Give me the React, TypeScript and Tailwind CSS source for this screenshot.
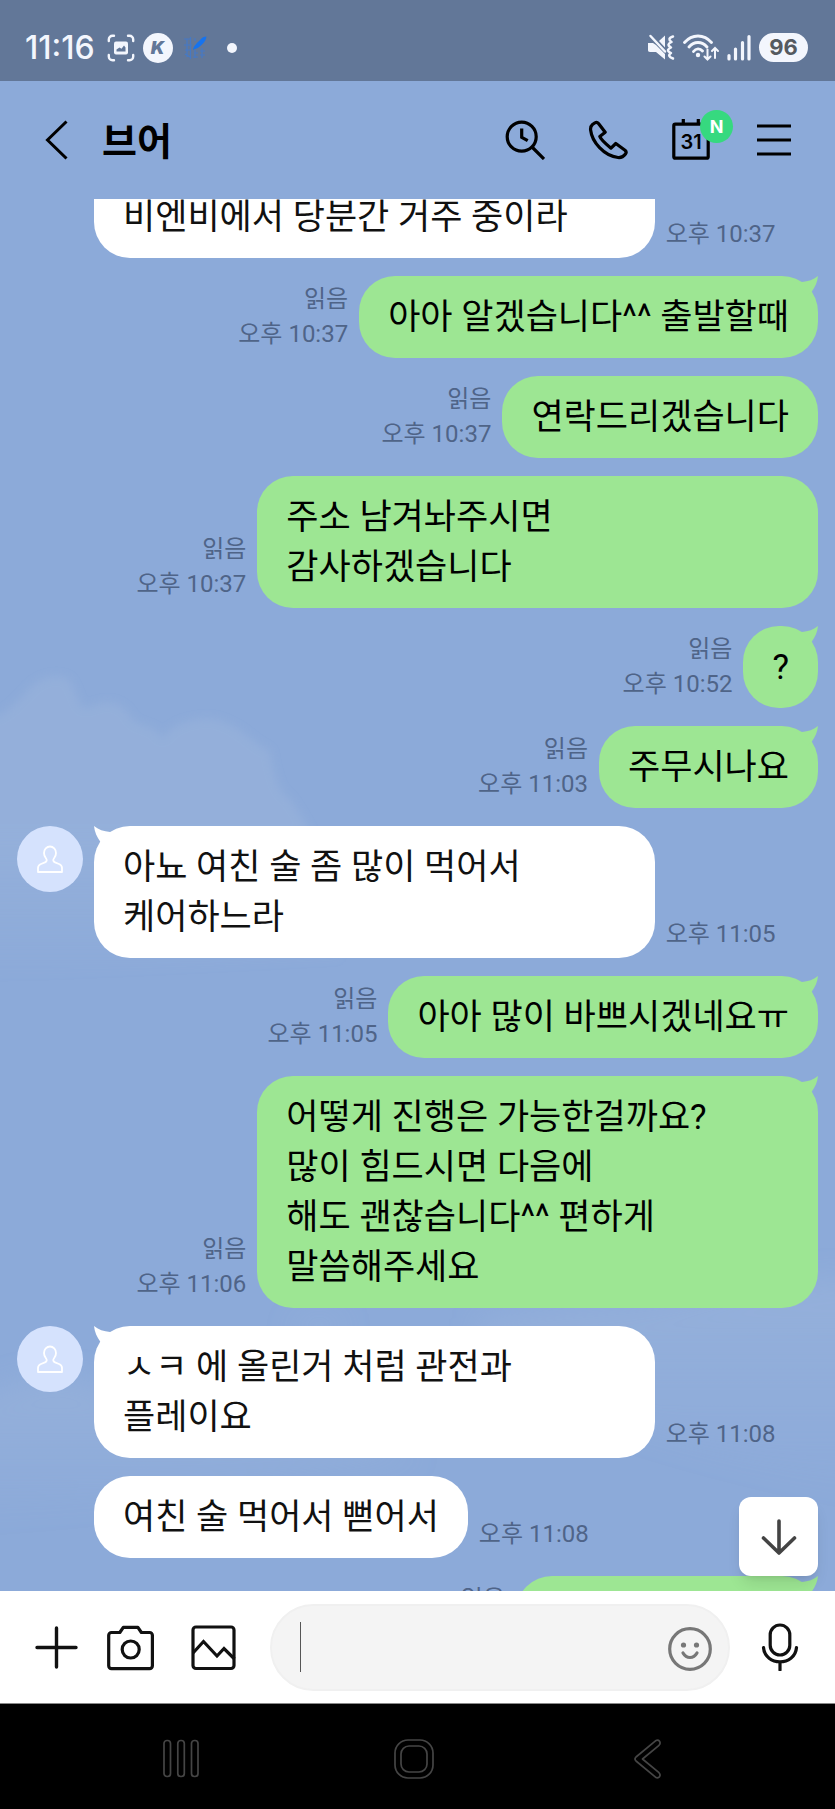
import React from 'react';

type Message = {
  id: number;
  from: 'me' | 'them';
  text: string;
  time: string;
  tail?: boolean;
  avatar?: boolean;
  size?: string;
};

const messages: Message[] = [
  { id: 1, from: 'them', text: '비엔비에서 당분간 거주 중이라', time: '오후 10:37', size: 'w-[70%] rounded-t-none' },
  { id: 2, from: 'me', text: '아아 알겠습니다^^ 출발할때', time: '오후 10:37', tail: true },
  { id: 3, from: 'me', text: '연락드리겠습니다', time: '오후 10:37' },
  { id: 4, from: 'me', text: '주소 남겨놔주시면\n감사하겠습니다', time: '오후 10:37', size: 'w-[70%]' },
  { id: 5, from: 'me', text: '?', time: '오후 10:52', tail: true },
  { id: 6, from: 'me', text: '주무시나요', time: '오후 11:03', tail: true },
  { id: 7, from: 'them', text: '아뇨 여친 술 좀 많이 먹어서\n케어하느라', time: '오후 11:05', tail: true, avatar: true, size: 'w-[70%]' },
  { id: 8, from: 'me', text: '아아 많이 바쁘시겠네요ㅠ', time: '오후 11:05', tail: true },
  { id: 9, from: 'me', text: '어떻게 진행은 가능한걸까요?\n많이 힘드시면 다음에\n해도 괜찮습니다^^ 편하게\n말씀해주세요', time: '오후 11:06', tail: true, size: 'w-[70%]' },
  { id: 10, from: 'them', text: 'ㅅㅋ 에 올린거 처럼 관전과\n플레이요', time: '오후 11:08', tail: true, avatar: true, size: 'w-[70%]' },
  { id: 11, from: 'them', text: '여친 술 먹어서 뻗어서', time: '오후 11:08' },
  { id: 12, from: 'me', text: '', time: '', tail: true, size: 'w-[302px]' },
];

const StatusBar: React.FC = () => (
  <div className="flex h-[81px] shrink-0 items-center justify-between bg-[#627798] pt-3.5 pr-[27px] pl-[25px] text-[#f3f6fd]">
    <div className="flex items-center">
      <span className="font-['Inter'] text-[32px] leading-8 font-medium">11:16</span>
      <svg className="ml-3 size-7" viewBox="0 0 28 28" fill="none" stroke="currentColor" strokeWidth="2.4" strokeLinecap="round">
        <path d="M1.8 7V5.5A3.7 3.7 0 0 1 5.5 1.8H7M21 1.8h1.5a3.7 3.7 0 0 1 3.7 3.7V7M26.2 21v1.5a3.7 3.7 0 0 1-3.7 3.7H21M7 26.2H5.5a3.7 3.7 0 0 1-3.7-3.7V21" />
        <rect x="7" y="7.5" width="14" height="13" rx="2" fill="currentColor" stroke="none" />
        <path d="M9.5 17.5v-2l3-2 2 1.3 2.5-3.3 1.500 2v4z" fill="#627798" stroke="none" />
      </svg>
      <span className="ml-2 flex size-[30px] items-center justify-center rounded-full bg-[#f3f6fd] font-['Inter'] text-lg font-black text-[#627798] italic">K</span>
      <svg className="ml-2.5 size-6" viewBox="0 0 24 24" fill="none">
        <path d="M1 3h7M1 9h8M2 14h5M2 18l5 3M4 3v18M7.5 1v22M12 2v3M11 17h4M10 21h5M12 14v8M19 12v10M17 15h5M17 19h5" stroke="#3c79d4" strokeWidth="1.2" opacity=".75" />
        <path d="M10 14c.5-4 4-7 7-10 2-2.500 4-3.500 6.500-3.500-.5 3-1.500 5-4 7.500-3 3-5.500 4.500-7.500 5z" fill="#1673ee" />
      </svg>
      <span className="ml-5 size-2.5 rounded-full bg-current" />
    </div>
    <div className="flex items-center gap-2">
      <svg className="h-[27px] w-7" viewBox="0 0 28 27" fill="none" stroke="currentColor" strokeWidth="2.5" strokeLinecap="round" strokeLinejoin="round">
        <path d="M1 9h5l3 2 9 9v5.500L9 18H3c-1.500 0-2-.8-2-2z" fill="currentColor" stroke="none" />
        <path d="M18 1.500v12l-6-6.500z" fill="currentColor" stroke="none" />
        <path d="M3.500 2 18 17.500" />
        <path d="M26 2.500c-4.500 1.500-4.500 3.500-1.500 5.500-4 2-4 3.500-.5 5.500-4 2-4 3.500 0 5.500-3 2-2 4 2 5.500" />
      </svg>
      <svg className="h-[27px] w-9" viewBox="0 0 36 27" fill="none" stroke="currentColor" strokeWidth="2.8" strokeLinecap="round">
        <path d="M1.500 8.500C9-.2 21-.2 28.500 8.500M6 13c5-6 13-6 18 0M10.500 17.500c2.500-3.500 6.500-3.500 9-.5" />
        <circle cx="15" cy="21" r="2.2" fill="currentColor" stroke="none" />
        <path d="M24.500 15.500v10M21.500 22.500l3 3 3-3M32 24V14M29 17l3-3 3 3" strokeWidth="2" />
      </svg>
      <svg className="h-[27px] w-6" viewBox="0 0 24 27" fill="none" stroke="currentColor" strokeWidth="3.2" strokeLinecap="round">
        <path d="M2 21.500V25M8.500 15v10M15.500 8.500V25M22 2.500V25" />
      </svg>
      <span className="flex h-[29px] w-[49px] items-center justify-center rounded-full bg-current font-['Inter'] text-[22px] font-bold">
        <span className="text-[#555a60]">96</span>
      </span>
    </div>
  </div>
);

const Header: React.FC = () => (
  <header className="flex h-[118px] shrink-0 items-center pr-[41px] pl-9">
    <button type="button" aria-label="뒤로" className="size-10">
      <svg viewBox="0 0 40 40" fill="none" stroke="currentColor" strokeWidth="3">
        <path d="M30.500 1.500 11.500 20l19 18.500" />
      </svg>
    </button>
    <h1 className="ml-6.5 flex-1 pt-1 text-[38px] leading-10 font-bold">브어</h1>
    <div className="flex items-center gap-[43px]">
      <button type="button" aria-label="검색" className="size-10">
        <svg viewBox="0 0 40 40" fill="none" stroke="currentColor" strokeWidth="3.2">
          <circle cx="16.7" cy="16.7" r="14.5" />
          <path d="M16.700 8.500v8.800l6 3.400M27 27l12 12" />
        </svg>
      </button>
      <button type="button" aria-label="통화" className="size-10">
        <svg viewBox="0 0 40 40" fill="none" stroke="currentColor" strokeWidth="3.2" strokeLinejoin="round">
          <path d="M4.500 4.500 7 2.800Q9 1.700 10.500 3.500L17.200 12.300 11.800 16.500Q13 20 23 28.200L27.800 23.500 37 30.200Q39 32 37.500 34 34.500 38 30 37.500C16 36 4 22 2.600 10Q2.200 6.500 4.500 4.500Z" />
        </svg>
      </button>
      <button type="button" aria-label="일정" className="relative size-10">
        <svg className="overflow-visible" viewBox="0 0 40 40" fill="none" stroke="currentColor" strokeWidth="3.2">
          <rect x="2.8" y="4.2" width="34.4" height="34" rx="1.5" />
          <path d="M12.300-1v5M27.300-1v5" />
        </svg>
        <span className="absolute inset-0 flex items-center justify-center pt-1 font-['Inter'] text-xl leading-5 font-semibold">31</span>
        <span className="absolute -top-2.5 left-[29px] flex size-[33px] items-center justify-center rounded-full bg-[#36d97f] font-['Inter'] text-lg font-bold text-white">N</span>
      </button>
      <button type="button" aria-label="메뉴" className="size-10">
        <svg viewBox="0 0 40 40" fill="none" stroke="currentColor" strokeWidth="3.2">
          <path d="M3 6h34M3 20h34M3 34h34" />
        </svg>
      </button>
    </div>
  </header>
);

const Clouds: React.FC = () => (
  <svg className="absolute inset-x-0 top-0 w-full" viewBox="0 0 835 1392" aria-hidden="true">
    <defs>
      <linearGradient id="cloud" x1="0" y1="0" x2="0" y2="1">
        <stop offset="0" stopColor="#9db6dc" stopOpacity=".5" />
        <stop offset=".5" stopColor="#9db6dc" stopOpacity=".5" />
        <stop offset="1" stopColor="#9db6dc" stopOpacity="0" />
      </linearGradient>
      <linearGradient id="haze" x1="0" y1="0" x2="0" y2="1">
        <stop offset="0" stopColor="#9db6dc" stopOpacity=".5" />
        <stop offset="1" stopColor="#9db6dc" stopOpacity="0" />
      </linearGradient>
      <filter id="soft" x="-10%" y="-10%" width="120%" height="120%">
        <feGaussianBlur stdDeviation="4" />
      </filter>
      <filter id="softer" x="-20%" y="-20%" width="140%" height="140%">
        <feGaussianBlur stdDeviation="14" />
      </filter>
    </defs>
    <path
      fill="url(#cloud)"
      filter="url(#soft)"
      d="M-20 522C0 520 12 508 24 496 36 478 60 472 70 482 80 500 78 512 90 508 108 500 122 502 132 520 142 530 154 524 162 540 172 524 196 518 214 520 244 528 248 542 270 552 274 580 280 594 290 600 310 630 330 660 340 760L-20 780Z"
    />
    <g fill="url(#haze)" filter="url(#softer)">
      <path d="M-40 1205C20 1180 60 1170 110 1190 200 1210 300 1210 420 1260L-40 1320Z" />
      <path d="M480 1120C560 1105 620 1110 700 1095 760 1085 800 1080 890 1080V1300C740 1260 580 1220 480 1160Z" />
      <path d="M290 1130q20-20 50-8l10 18h-60z" />
    </g>
  </svg>
);

const Avatar: React.FC = () => (
  <span className="flex size-[66px] items-center justify-center rounded-full bg-[#d5e2fd]">
    <svg className="size-7" viewBox="0 0 28 28" fill="none" stroke="#fff" strokeWidth="1.8" strokeLinejoin="round">
      <path d="M2 27v-4c0-2 1-3.200 3-4l4-1.700c2-.8 2.300-2.500.8-4.300C8.500 11.500 8 10 8 8a6 6.500 0 0 1 12 0c0 2-.5 3.500-1.800 5-1.500 1.800-1.200 3.500.8 4.300l4 1.700c2 .8 3 2 3 4v4z" />
    </svg>
  </span>
);

const Bubble: React.FC<{ message: Message }> = ({ message }) => {
  const mine = message.from === 'me';
  return (
    <div
      className={`relative min-h-[82px] min-w-[74px] rounded-[36px] px-[29px] pt-[17px] pb-[15px] text-[35px] leading-[50px] whitespace-pre-line ${
        mine ? 'bg-[#9de693] text-center text-black' : 'bg-white text-[#111]'
      } ${message.size ?? ''}`}
    >
      {message.tail && (
        <svg
          className={`absolute top-0 size-5 ${mine ? 'right-0 -scale-x-100 text-[#9de693]' : 'left-0 text-white'}`}
          viewBox="0 0 20 20"
          fill="currentColor"
        >
          <path d="M0 0C4 3.500 10 5.500 16 6l4 4-10 10-3.500-4C3 11 .5 6 0 0Z" />
        </svg>
      )}
      <p className={message.size ? 'text-left' : ''}>{message.text}</p>
    </div>
  );
};

const MessageRow: React.FC<{ message: Message }> = ({ message }) => {
  if (message.from === 'me') {
    return (
      <li className="flex items-end justify-end gap-[11px]">
        <div className="pb-1.5 text-right text-2xl leading-[35px] text-[#4f6488]">
          <p>읽음</p>
          <p className="min-h-[35px]">{message.time}</p>
        </div>
        <Bubble message={message} />
      </li>
    );
  }
  return (
    <li className="flex items-end gap-[11px]">
      <div className="w-[66px] shrink-0 self-start">{message.avatar && <Avatar />}</div>
      <Bubble message={message} />
      <p className="pb-1.5 text-2xl leading-[35px] whitespace-nowrap text-[#4f6488]">{message.time}</p>
    </li>
  );
};

const InputBar: React.FC = () => (
  <form className="flex h-[113px] shrink-0 items-center border-b border-[#888] bg-white pr-[31px] pl-8 text-[#111]">
    <button type="button" aria-label="추가" className="size-12 shrink-0">
      <svg viewBox="0 0 48 48" fill="none" stroke="currentColor" strokeWidth="3.4" strokeLinecap="round">
        <path d="M24.500 5v39M5 24.500h39" />
      </svg>
    </button>
    <button type="button" aria-label="카메라" className="ml-[26px] size-12 shrink-0">
      <svg viewBox="0 0 48 48" fill="none" stroke="currentColor" strokeWidth="3.2" strokeLinejoin="round">
        <path d="M5.500 9.500h8.300l3.500-5.200h14.600l3.500 5.200h8.200a2.800 2.800 0 0 1 2.800 2.800v30.500a2.800 2.800 0 0 1-2.800 2.800H5.500a2.800 2.800 0 0 1-2.800-2.800V12.300a2.800 2.800 0 0 1 2.800-2.800z" />
        <circle cx="24.7" cy="26.5" r="8.5" />
      </svg>
    </button>
    <button type="button" aria-label="사진" className="ml-9 size-12 shrink-0">
      <svg viewBox="0 0 48 48" fill="none" stroke="currentColor" strokeWidth="3.2">
        <rect x="3" y="4" width="41" height="41.5" rx="3" />
        <path d="m3 30 10.500-11.500L27 33l7-7.500L44.500 36" />
      </svg>
    </button>
    <div className="ml-8 flex h-[87px] min-w-0 flex-1 items-center rounded-full border-2 border-[#f0f0f0] bg-[#f4f4f4] pr-3.5 pl-7">
      <span className="h-[50px] w-px bg-[#555]" />
      <input aria-label="메시지 입력" className="h-full min-w-0 flex-1 bg-transparent text-[35px] outline-none" />
      <button type="button" aria-label="스티커" className="size-12 shrink-0 text-[#777]">
        <svg viewBox="0 0 48 48" fill="none" stroke="currentColor" strokeWidth="3.2" strokeLinecap="round">
          <circle cx="24" cy="26" r="20.3" />
          <path d="M17 30c3.500 6 10.500 6 14 0" />
          <circle cx="17.5" cy="22" r="2.6" fill="currentColor" stroke="none" />
          <circle cx="30.5" cy="22" r="2.6" fill="currentColor" stroke="none" />
        </svg>
      </button>
    </div>
    <button type="button" aria-label="음성 메시지" className="ml-[26px] size-12 shrink-0">
      <svg viewBox="0 0 48 48" fill="none" stroke="currentColor" strokeWidth="3.2" strokeLinecap="round">
        <rect x="14.2" y="2" width="19.6" height="30" rx="9.8" />
        <path d="M7.500 24.500c1.500 19 31.500 19 33 0M24 39v8" />
      </svg>
    </button>
  </form>
);

const NavBar: React.FC = () => (
  <nav className="grid h-[105px] shrink-0 grid-cols-3 place-items-center bg-black pt-1 pr-[70px] pl-16 text-[#454545]">
    <button type="button" aria-label="최근 앱" className="size-10">
      <svg viewBox="0 0 40 40" fill="none" stroke="currentColor" strokeWidth="1.7">
        <rect x="3" y="1.5" width="6.5" height="36" rx="3" />
        <rect x="16.8" y="1.5" width="6.5" height="36" rx="3" />
        <rect x="30.5" y="1.5" width="6.5" height="36" rx="3" />
      </svg>
    </button>
    <button type="button" aria-label="홈" className="size-10">
      <svg viewBox="0 0 40 40" fill="none" stroke="currentColor" strokeWidth="1.7">
        <rect x="1" y="1" width="38" height="38" rx="13" />
        <rect x="7" y="7" width="26" height="26" rx="8" />
      </svg>
    </button>
    <button type="button" aria-label="이전" className="size-10">
      <svg viewBox="0 0 40 40" fill="none" stroke="currentColor" strokeWidth="1.7" strokeLinejoin="round">
        <path d="M27.500 1.800 8 18q-2 2 0 4l19.500 16.200c3.500 1.800 6-1.700 3.500-4.500L14.500 20 31 6.300c2.500-2.800 0-6.300-3.500-4.500z" />
      </svg>
    </button>
  </nav>
);

const App: React.FC = () => {
  return (
    <div className="flex h-screen w-full flex-col bg-[#8caad9] font-['Roboto','Noto_Sans_CJK_KR',sans-serif] text-black">
      <StatusBar />
      <Header />
      <main className="relative min-h-0 flex-1 overflow-hidden">
        <Clouds />
        <ul className="relative -mt-[23px] flex flex-col gap-[18px] px-[17px]">
          {messages.map((message) => (
            <MessageRow key={message.id} message={message} />
          ))}
        </ul>
        {/* Jump to latest */}
        <button
          type="button"
          aria-label="맨 아래로"
          className="absolute right-[17px] bottom-[15px] flex size-[79px] items-center justify-center rounded-xl bg-white text-[#444] shadow-lg"
        >
          <svg className="size-10" viewBox="0 0 40 40" fill="none" stroke="currentColor" strokeWidth="3.6" strokeLinecap="round" strokeLinejoin="round">
            <path d="M20 4v32M4.500 21 20 36l15.500-15" />
          </svg>
        </button>
      </main>
      <InputBar />
      <NavBar />
    </div>
  );
};

export default App;
